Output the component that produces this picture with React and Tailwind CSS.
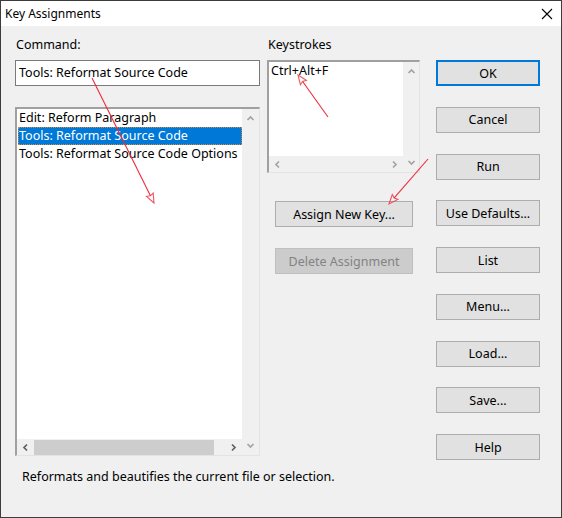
import React from "react";

const FONT = { fontFamily: '"Noto Sans", "Liberation Sans", sans-serif' };

function Chevron({ dir, color = "#606060", size = 9 }) {
  const pts = {
    up: "1.5,6 4.5,3 7.5,6",
    down: "1.5,3 4.5,6 7.5,3",
    left: "6,1.5 3,4.5 6,7.5",
    right: "3,1.5 6,4.5 3,7.5",
  }[dir];
  return (
    <svg width={size} height={size} viewBox="0 0 9 9">
      <polyline points={pts} fill="none" stroke={color} strokeWidth="1.7" />
    </svg>
  );
}

function Button({ children, def, disabled, className = "" }) {
  return (
    <div
      className={
        "h-[26px] flex items-center justify-center pt-[2px] text-[12.5px] " +
        (def
          ? "border-2 border-[#0078d7] bg-[#e1e1e1] text-black "
          : disabled
          ? "border border-[#bfbfbf] bg-[#cccccc] text-[#838383] "
          : "border border-[#adadad] bg-[#e1e1e1] text-black ") +
        className
      }
    >
      {children}
    </div>
  );
}

function Arrow({ x1, y1, x2, y2 }) {
  const ang = Math.atan2(y2 - y1, x2 - x1);
  const L = 10;
  const W = 0.38;
  const a1 = ang + Math.PI - W;
  const a2 = ang + Math.PI + W;
  const p1 = [x2 + L * Math.cos(a1), y2 + L * Math.sin(a1)];
  const p2 = [x2 + L * Math.cos(a2), y2 + L * Math.sin(a2)];
  const bx = x2 + (L - 2) * Math.cos(ang + Math.PI);
  const by = y2 + (L - 2) * Math.sin(ang + Math.PI);
  return (
    <g fill="none" stroke="#ee2a3c" strokeWidth="1.1">
      <line x1={x1} y1={y1} x2={bx} y2={by} />
      <polygon points={`${x2},${y2} ${p1[0]},${p1[1]} ${bx},${by} ${p2[0]},${p2[1]}`} strokeOpacity="0.8" />
    </g>
  );
}

export default function App() {
  return (
    <div
      className="relative w-[562px] h-[518px] bg-[#f0f0f0] border border-[#3c3c3c] text-black flex flex-col"
      style={FONT}
    >
      {/* Title bar */}
      <div className="h-[25px] bg-white flex items-center justify-between pl-[4px] pr-[8px] shrink-0">
        <span className="text-[12px] leading-none">Key Assignments</span>
        <svg width="12" height="12" viewBox="0 0 12 12">
          <path d="M1 1 L11 11 M11 1 L1 11" stroke="#000" strokeWidth="1.1" />
        </svg>
      </div>

      {/* Body */}
      <div className="flex flex-1 pl-[14px]">
        {/* Left column */}
        <div className="w-[245px] flex flex-col pt-[11px]">
          <div className="text-[12.5px] leading-[16px] h-[16px] pl-[1px]">Command:</div>
          <div className="mt-[7px] h-[26px] border border-[#7a7a7a] bg-white flex items-center pl-[3px] text-[12.5px]">
            Tools: Reformat Source Code
          </div>
          <div className="mt-[21px] h-[349px] border-t-2 border-l-2 border-t-[#a0a0a0] border-l-[#a0a0a0] border-r border-b border-r-[#e3e3e3] border-b-[#e3e3e3] bg-white flex">
            <div className="flex-1 flex flex-col min-w-0">
              <div className="flex-1 pl-[1px] text-[12.5px] leading-[18px] overflow-hidden">
                <div className="h-[18px] pl-[1px] whitespace-nowrap">Edit: Reform Paragraph</div>
                <div className="h-[18px] pl-[1px] whitespace-nowrap bg-[#0078d7] text-white outline-1 outline-dotted outline-[#d08a3c] -outline-offset-1">
                  Tools: Reformat Source Code
                </div>
                <div className="h-[18px] pl-[1px] whitespace-nowrap">Tools: Reformat Source Code Options</div>
              </div>
              <div className="h-[16px] bg-[#f0f0f0] flex items-center shrink-0">
                <div className="w-[16px] flex justify-center">
                  <Chevron dir="left" />
                </div>
                <div className="flex-1 h-full flex items-center">
                  <div className="ml-[1px] w-[180px] h-[15px] bg-[#cdcdcd]" />
                </div>
                <div className="w-[17px] flex justify-center">
                  <Chevron dir="right" />
                </div>
              </div>
            </div>
            <div className="w-[17px] bg-[#f0f0f0] flex flex-col justify-between items-center py-[5px]">
              <Chevron dir="up" color="#a3a3a3" />
              <Chevron dir="down" color="#a3a3a3" />
            </div>
          </div>
        </div>

        {/* Middle column */}
        <div className="ml-[7px] w-[153px] flex flex-col pt-[11px]">
          <div className="text-[12.5px] leading-[16px] h-[16px] pl-[1px]">Keystrokes</div>
          <div className="mt-[7px] h-[113px] border-t-2 border-l-2 border-t-[#a0a0a0] border-l-[#a0a0a0] border-r border-b border-r-[#e3e3e3] border-b-[#e3e3e3] bg-white flex">
            <div className="flex-1 flex flex-col">
              <div className="flex-1 pl-[2px] pt-[1px] text-[12.5px] leading-[16px]">Ctrl+Alt+F</div>
              <div className="h-[16px] bg-[#f0f0f0] flex items-center justify-between px-[4px]">
                <Chevron dir="left" color="#a3a3a3" />
                <Chevron dir="right" color="#a3a3a3" />
              </div>
            </div>
            <div className="w-[16px] bg-[#f0f0f0] flex flex-col justify-between items-center py-[5px]">
              <Chevron dir="up" color="#a3a3a3" />
              <Chevron dir="down" color="#a3a3a3" />
            </div>
          </div>
          <div className="ml-[8px] w-[138px] mt-[28px] flex flex-col gap-[21px]">
            <Button>Assign New Key...</Button>
            <Button disabled>Delete Assignment</Button>
          </div>
        </div>

        {/* Right column */}
        <div className="ml-[16px] w-[104px] pt-[34px] flex flex-col gap-[20.75px]">
          <Button def>OK</Button>
          <Button>Cancel</Button>
          <Button>Run</Button>
          <Button>Use Defaults...</Button>
          <Button>List</Button>
          <Button>Menu...</Button>
          <Button>Load...</Button>
          <Button>Save...</Button>
          <Button>Help</Button>
        </div>
      </div>

      <div className="absolute left-[21px] top-[468px] text-[12.5px] leading-[16px]">
        Reformats and beautifies the current file or selection.
      </div>

      <svg className="absolute left-0 top-0 pointer-events-none" width="562" height="518">
        <Arrow x1={91} y1={77} x2={153} y2={202} />
        <Arrow x1={327} y1={116} x2={297} y2={74} />
        <Arrow x1={427} y1={158} x2={388} y2={203} />
      </svg>
    </div>
  );
}
